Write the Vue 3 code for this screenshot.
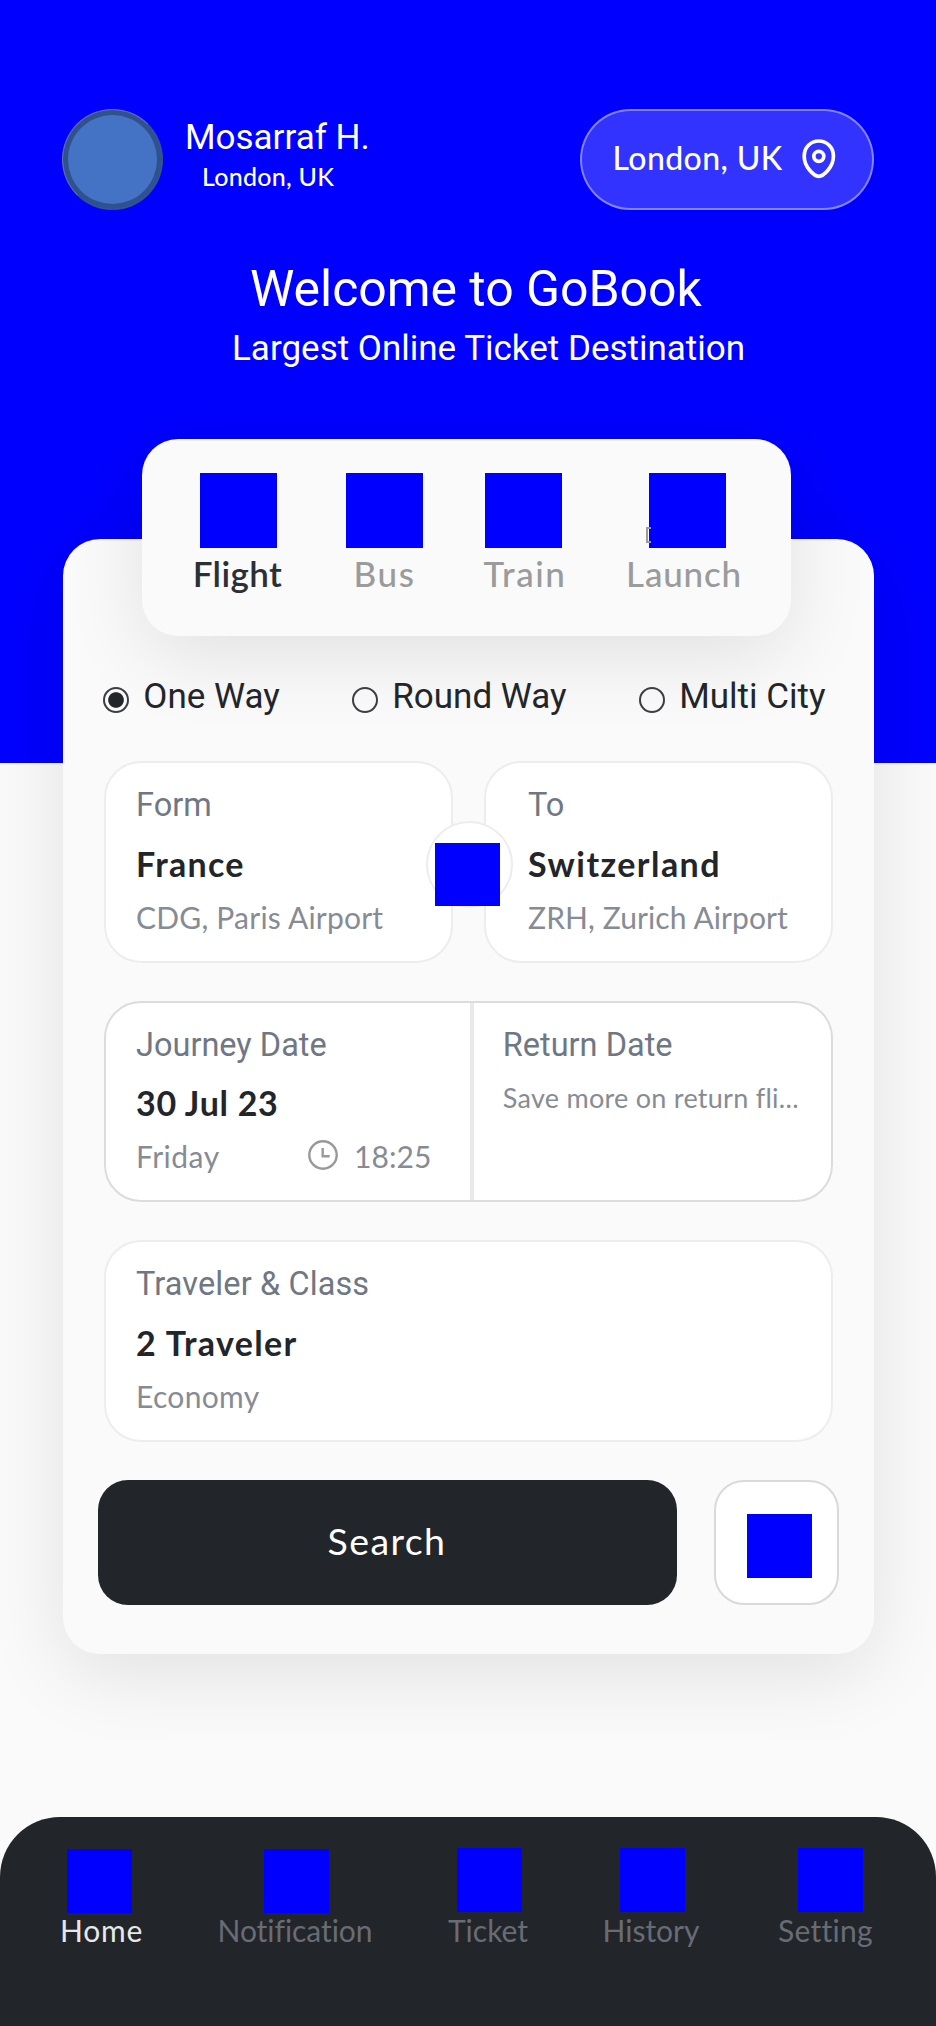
<script setup>
const modes = [
  { label: 'Flight', key: 'flight', active: true },
  { label: 'Bus', key: 'bus' },
  { label: 'Train', key: 'train' },
  { label: 'Launch', key: 'launch' },
]
const trips = [
  { label: 'One Way', selected: true },
  { label: 'Round Way' },
  { label: 'Multi City' },
]
const navItems = [
  { label: 'Home', key: 'home', active: true },
  { label: 'Notification', key: 'notification' },
  { label: 'Ticket', key: 'ticket' },
  { label: 'History', key: 'history' },
  { label: 'Setting', key: 'setting' },
]
</script>

<template>
  <div class="page">
    <header class="top">
      <div class="avatar"></div>
      <div class="user">
        <div class="user-name">Mosarraf H.</div>
        <div class="user-place">London, UK</div>
      </div>
      <div class="pill">
        <span>London, UK</span>
        <svg width="40" height="44" viewBox="0 0 40 44" fill="none" stroke="#fff" stroke-width="3.7">
          <path d="M19.8 39.3C15 39.3 5.2 30 5.2 19.2C5.2 10.3 11.7 4 19.8 4S34.4 10.3 34.4 19.2C34.4 30 24.6 39.3 19.8 39.3Z" />
          <circle cx="19.8" cy="19.3" r="5" />
        </svg>
      </div>
    </header>

    <h1 class="title">Welcome to GoBook</h1>
    <p class="subtitle">Largest Online Ticket Destination</p>

    <main class="card">
      <nav class="modes">
        <div v-for="m in modes" :key="m.key" class="mode" :class="[m.key, { active: m.active }]">
          <i class="mode-icon"></i>
          <span class="mode-label">{{ m.label }}</span>
        </div>
      </nav>

      <div class="trips">
        <div v-for="t in trips" :key="t.label" class="trip">
          <i class="radio" :class="{ on: t.selected }"></i>
          <span>{{ t.label }}</span>
        </div>
      </div>

      <section class="fields">
        <div class="route">
          <div class="field">
            <div class="label">Form</div>
            <div class="value france">France</div>
            <div class="sub paris">CDG, Paris Airport</div>
          </div>
          <div class="field to">
            <div class="label">To</div>
            <div class="value swiss">Switzerland</div>
            <div class="sub">ZRH, Zurich Airport</div>
          </div>
          <div class="swap"><i></i></div>
        </div>

        <div class="dates">
          <div class="date">
            <div class="label">Journey Date</div>
            <div class="value day">30 Jul 23</div>
            <div class="when">
              <span class="sub weekday">Friday</span>
              <svg width="30" height="30" viewBox="0 0 30 30" fill="none" stroke="#999" stroke-width="2.4">
                <circle cx="15" cy="15" r="13.7" />
                <path d="M14.7 8v8.2h7" />
              </svg>
              <span class="sub time">18:25</span>
            </div>
          </div>
          <div class="date return">
            <div class="label">Return Date</div>
            <div class="hint">Save more on return fli...</div>
          </div>
        </div>

        <div class="field">
          <div class="label class-label">Traveler &amp; Class</div>
          <div class="value travelers">2 Traveler</div>
          <div class="sub economy">Economy</div>
        </div>
      </section>

      <div class="actions">
        <button class="search">Search</button>
        <button class="extra"><i></i></button>
      </div>
    </main>

    <footer class="nav">
      <div v-for="n in navItems" :key="n.key" class="nav-item" :class="[n.key, { active: n.active }]">
        <i></i>
        <span>{{ n.label }}</span>
      </div>
    </footer>
  </div>
</template>

<style>
body {
  margin: 0;
  background: #fafafa;
}
</style>

<style scoped>
* {
  box-sizing: border-box;
}
.page {
  display: flex;
  flex-direction: column;
  width: 936px;
  height: 2026px;
  overflow: hidden;
  background: linear-gradient(#0000ff 763.5px, #fafafa 763.5px);
  font-family: Roboto, "Liberation Sans", sans-serif;
  font-variant-ligatures: none;
  white-space: nowrap;
}
.top {
  display: flex;
  height: 210px;
  padding: 109px 62.5px 0 62px;
}
.avatar {
  width: 101px;
  height: 101px;
  border: 1px solid #6b6c9c;
  border-right-color: #2f528f;
  border-bottom-color: #2f528f;
  border-radius: 50%;
  background: #4472c4;
  box-shadow: inset 0 0 0 5px #2f528f;
}
.user {
  padding: 8px 0 0 22px;
  color: #fff;
}
.user-name {
  font-size: 35px;
  line-height: 42px;
}
.user-place {
  margin-top: 2px;
  padding-left: 17px;
  font: 500 25px/30px Lato, sans-serif;
  letter-spacing: 0.25px;
}
.pill {
  display: flex;
  align-items: center;
  width: 294px;
  height: 100.5px;
  margin-left: auto;
  padding: 0 0 2px 31px;
  border: 2px solid rgba(255, 255, 255, 0.4);
  border-radius: 51px;
  background: rgba(255, 255, 255, 0.2);
  color: #fff;
  font: 500 32px/40px Lato, sans-serif;
  letter-spacing: 0.4px;
}
.pill svg {
  margin: 2px 33px 0 auto;
}
.title {
  margin: 49px 0 0;
  padding-left: 250px;
  color: #fff;
  font-size: 50px;
  font-weight: 400;
  line-height: 60px;
  letter-spacing: -0.05px;
}
.subtitle {
  margin: 10px 0 0;
  padding-left: 232px;
  color: #fff;
  font-size: 35px;
  line-height: 40px;
}
.card {
  display: flex;
  flex-direction: column;
  width: 811px;
  height: 1115px;
  margin: 170px 0 0 62.5px;
  flex-shrink: 0;
  border-radius: 37px;
  background: #fafafa;
  box-shadow: 0 20px 80px rgba(0, 0, 0, 0.1);
}
.modes {
  display: grid;
  grid-template-columns: 140px 153px 125px 203px;
  width: 649px;
  height: 197px;
  margin: -100px 0 0 79.5px;
  padding: 34px 0 0 26px;
  flex-shrink: 0;
  border-radius: 36px;
  background: #fafafa;
  box-shadow: 0 20px 80px rgba(0, 0, 0, 0.1);
}
.mode {
  display: flex;
  flex-direction: column;
  align-items: center;
  color: #9b9b9b;
}
.mode-icon {
  position: relative;
  width: 77px;
  height: 75px;
  background: #0000ff;
}
.launch .mode-icon::before {
  content: "";
  position: absolute;
  left: -3px;
  top: 54px;
  width: 3px;
  height: 12px;
  border: 2px solid #9b9b9b;
  border-right: 0;
}
.mode-label {
  margin-top: 5px;
  font: 500 35px/40px Lato, sans-serif;
  letter-spacing: 1.6px;
}
.flight .mode-label {
  margin-right: 1px;
  color: #2c2f35;
  font-weight: 600;
  letter-spacing: 0.4px;
}
.train .mode-label {
  margin-left: 3px;
}
.launch .mode-label {
  margin-right: 7px;
  letter-spacing: 0.8px;
}
.trips {
  display: flex;
  justify-content: space-between;
  margin-top: 41px;
  padding: 0 48px 0 40.3px;
}
.trip {
  display: flex;
  align-items: center;
  gap: 14.5px;
  color: #22252a;
  font-size: 35px;
  line-height: 40px;
}
.radio {
  width: 26px;
  height: 26px;
  margin-top: 5px;
  border: 2px solid #3a3d42;
  border-radius: 50%;
}
.radio.on {
  background: radial-gradient(circle, #22252a 7.3px, transparent 8.3px);
}
.fields {
  display: flex;
  flex-direction: column;
  gap: 38px;
  margin-top: 44px;
  padding: 0 41px;
}
.field,
.dates {
  height: 201.5px;
  border: 2px solid #ededed;
  border-radius: 37px;
  background: #fff;
}
.field {
  padding: 22px 0 0 30.5px;
}
.route {
  position: relative;
  display: flex;
  justify-content: space-between;
}
.route .field {
  width: 349px;
}
.route .to {
  padding-left: 42.5px;
}
.swap {
  position: absolute;
  left: 322px;
  top: 59.5px;
  width: 87px;
  height: 87px;
  padding: 20px 0 0 7.5px;
  border: 2px solid #ededed;
  border-radius: 50%;
  background: #fff;
}
.swap i {
  display: block;
  width: 65px;
  height: 63px;
  background: #0000ff;
}
.label {
  color: #707784;
  font-size: 32.5px;
  line-height: 41px;
}
.class-label {
  letter-spacing: 0.1px;
}
.value {
  margin-top: 17.5px;
  color: #22252a;
  font: 700 34px/40px Lato, sans-serif;
  letter-spacing: 1.3px;
}
.swiss {
  letter-spacing: 1.45px;
}
.day {
  letter-spacing: 0.7px;
}
.travelers {
  letter-spacing: 1.35px;
}
.sub {
  margin-top: 13.5px;
  color: #868b95;
  font: 400 30px/40px Lato, sans-serif;
  letter-spacing: 0.1px;
}
.paris {
  letter-spacing: 0.22px;
}
.economy {
  letter-spacing: 0.33px;
}
.dates {
  display: flex;
  border-color: #dcdcdc;
}
.date {
  width: 364.5px;
  padding: 22px 0 0 30.5px;
}
.return {
  width: auto;
  flex: 1;
  padding-left: 28.8px;
  border-left: 4px solid #e9e9e9;
}
.when {
  display: flex;
  margin-top: 13px;
}
.when .sub {
  margin-top: 0;
}
.when svg {
  margin-top: 3.5px;
}
.when .weekday {
  width: 172px;
  letter-spacing: 0.5px;
}
.when .time {
  margin-left: 16px;
}
.hint {
  margin-top: 12.5px;
  color: #868b95;
  font: 400 27px/40px Lato, sans-serif;
  letter-spacing: 0.27px;
}
.actions {
  display: flex;
  gap: 37.3px;
  margin: 38px 0 0 35px;
}
.search {
  width: 579px;
  height: 125px;
  padding: 0 0 2px 0;
  border: 0;
  border-radius: 30px;
  background: #22252a;
  color: #fff;
  font: 400 37.5px/40px Lato, sans-serif;
  letter-spacing: 1.4px;
}
.extra {
  display: flex;
  width: 125px;
  height: 125px;
  padding: 32.7px 0 0 31px;
  border: 2px solid #d9d9d9;
  border-radius: 30px;
  background: #fff;
}
.extra i {
  width: 65px;
  height: 64px;
  background: #0000ff;
}
.nav {
  display: grid;
  grid-template-columns: 179px 215px 171px 155px 201px;
  height: 209.5px;
  margin-top: auto;
  padding: 31.5px 0 0 10px;
  flex-shrink: 0;
  border-radius: 60px 60px 0 0;
  background: #22252a;
}
.nav-item {
  display: flex;
  flex-direction: column;
  align-items: center;
  color: #696c75;
  font: 400 30px/34px Lato, sans-serif;
}
.nav-item i {
  width: 65px;
  height: 64px;
  margin-bottom: 1px;
  background: #0000ff;
}
.home i,
.notification i {
  margin: 1px 0 0;
}
.home span {
  margin-left: 4px;
  color: #e8e8e8;
  letter-spacing: 0.8px;
}
.notification span {
  margin-right: 3px;
  letter-spacing: -0.05px;
}
.ticket span,
.history span {
  margin-right: 3px;
}
.setting span {
  margin-right: 10px;
  letter-spacing: 0.3px;
}
</style>
